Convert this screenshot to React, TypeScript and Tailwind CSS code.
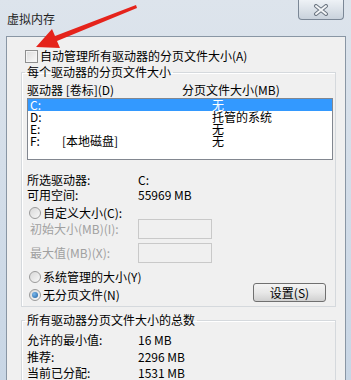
import React from 'react';

function Radio({ checked = false }: { checked?: boolean }) {
  return (
    <span className="relative flex h-[12px] w-[12px] shrink-0 items-center justify-center rounded-full border border-[#9a9a9a] bg-gradient-to-br from-[#d8d8d8] to-[#f8f8f8]">
      {checked && (
        <span className="h-[6px] w-[6px] rounded-full bg-[radial-gradient(circle_at_35%_35%,#7ab8ec,#1f5fa0)]" />
      )}
    </span>
  );
}

function TextBox() {
  return <div className="h-[20px] w-[74px] border border-[#c9c9c9] bg-[#f0f0f0]" />;
}

const drives = [
  { d: 'C:', label: '', size: '无', selected: true },
  { d: 'D:', label: '', size: '托管的系统' },
  { d: 'E:', label: '', size: '无' },
  { d: 'F:', label: '[本地磁盘]', size: '无' },
];

export default function App() {
  return (
    <div className="relative h-[380px] w-[351px] overflow-hidden bg-gradient-to-b from-[#dde4ec] to-[#c8d6e5] font-['Noto_Sans_CJK_SC',sans-serif] text-[12px] leading-[14px] text-black">
      {/* title bar */}
      <div className="flex h-[36px] items-start">
        <div className="pl-[7px] pt-[12px] text-[12px] leading-[14px] text-[#1e1e1e]">虚拟内存</div>
        <div className="ml-auto mr-[7px] flex h-[20px] w-[46px] items-center justify-center rounded-b-[4px] border border-t-0 border-[#7b8796] bg-gradient-to-b from-[#eef2f6] to-[#c9d2dc]">
          <svg width="16" height="12" viewBox="0 0 16 12">
            <path d="M3 2 L13 10 M13 2 L3 10" stroke="#6c7682" strokeWidth="4" strokeLinecap="round" />
            <path d="M3 2 L13 10 M13 2 L3 10" stroke="#f4f6f8" strokeWidth="2" strokeLinecap="round" />
          </svg>
        </div>
      </div>

      <div className="flex h-[344px]">
        <div className="w-[6px] shrink-0" />
        <div className="w-[340px] shrink-0 border border-b-0 border-[#8996a4] bg-[#f0f0f0]">
          {/* auto manage checkbox */}
          <div className="flex items-center gap-[2px] pl-[18px] pt-[12px]">
            <span className="h-[13px] w-[13px] shrink-0 border border-[#8e8f8f] bg-gradient-to-br from-[#dcdcdc] to-[#fafafa] shadow-[inset_0_0_0_1px_#f4f4f4]" />
            <span>自动管理所有驱动器的分页文件大小(A)</span>
          </div>

          {/* per-drive group */}
          <fieldset className="ml-[14px] mt-[2px] w-[315px] border border-[#d5d9dd] pb-[4px] shadow-[inset_1px_1px_0_#fff]">
            <legend className="ml-[3px] px-[2px]">每个驱动器的分页文件大小</legend>
            <div className="flex pl-[5px] pt-[4px]">
              <span className="w-[155px]">驱动器 [卷标](D)</span>
              <span>分页文件大小(MB)</span>
            </div>
            <div className="ml-[5px] mt-[1px] h-[62px] w-[306px] border border-[#828790] bg-white">
              {drives.map((r) => (
                <div
                  key={r.d}
                  className={
                    r.selected
                      ? 'flex h-[12px] items-center bg-[#3399ff] pl-[2px] leading-[12px] text-white'
                      : 'flex h-[12px] items-center pl-[2px] leading-[12px]'
                  }
                >
                  <span className="w-[32px]">{r.d}</span>
                  <span className="w-[150px]">{r.label}</span>
                  <span>{r.size}</span>
                </div>
              ))}
            </div>

            <div className="mt-[12px] grid grid-cols-[111px_1fr] pl-[5px] leading-[15px]">
              <span>所选驱动器:</span>
              <span>C:</span>
              <span>可用空间:</span>
              <span>55969 MB</span>
            </div>

            <div className="mt-[5px] flex h-[12px] items-center gap-[2px] pl-[7px]">
              <Radio />
              <span>自定义大小(C):</span>
            </div>
            <div className="mt-[0px] flex items-center pl-[8px] text-[#a0a0a0]">
              <span className="w-[108px]">初始大小(MB)(I):</span>
              <TextBox />
            </div>
            <div className="mt-[4px] flex items-center pl-[8px] text-[#a0a0a0]">
              <span className="w-[108px]">最大值(MB)(X):</span>
              <TextBox />
            </div>

            <div className="mt-[7px] flex items-end pr-[9px]">
              <div className="flex flex-col gap-[4px] pl-[7px]">
                <div className="flex items-center gap-[2px]">
                  <Radio />
                  <span>系统管理的大小(Y)</span>
                </div>
                <div className="flex items-center gap-[2px]">
                  <Radio checked />
                  <span>无分页文件(N)</span>
                </div>
              </div>
              <button className="ml-auto flex h-[19px] w-[73px] items-center justify-center rounded-[3px] border border-[#707070] bg-gradient-to-b from-[#f4f4f4] via-[#e8e8e8] to-[#d0d0d0] text-[12px] leading-[14px]">
                设置(S)
              </button>
            </div>
          </fieldset>

          {/* totals group */}
          <fieldset className="ml-[14px] mt-[6px] h-[80px] w-[315px] border border-[#d5d9dd] shadow-[inset_1px_1px_0_#fff]">
            <legend className="ml-[3px] px-[2px]">所有驱动器分页文件大小的总数</legend>
            <div className="mt-[5px] grid grid-cols-[111px_1fr] pl-[5px] leading-[16.5px]">
              <span>允许的最小值:</span>
              <span>16 MB</span>
              <span>推荐:</span>
              <span>2296 MB</span>
              <span>当前已分配:</span>
              <span>1531 MB</span>
            </div>
          </fieldset>
        </div>
      </div>

      {/* red annotation arrow */}
      <svg className="pointer-events-none absolute left-0 top-0" width="351" height="380" viewBox="0 0 351 380">
        <polygon points="36,47 52,29 55,36 136,5 137,8 57,41 60,48" fill="#e5231b" />
      </svg>
    </div>
  );
}
